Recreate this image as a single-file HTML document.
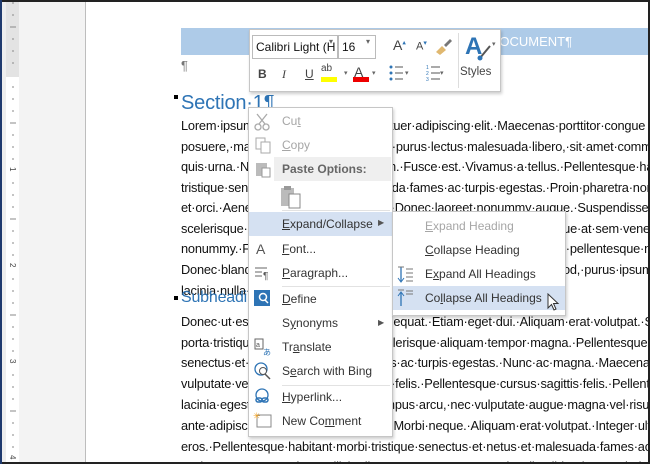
<!DOCTYPE html>
<html><head><style>
*{margin:0;padding:0;box-sizing:border-box}
body{width:650px;height:464px;overflow:hidden;background:#fff;position:relative;font-family:"Liberation Sans",sans-serif}
.abs{position:absolute}
.clip{position:absolute;left:0;top:0;width:648px;height:462px;overflow:hidden}
.doc{position:absolute;left:181px;font-size:12.8px;color:#111;white-space:nowrap;letter-spacing:-0.2px}
.mi{position:absolute;left:282px;font-size:12px;color:#333;white-space:nowrap}
.si{position:absolute;left:425px;font-size:12px;color:#333;white-space:nowrap}
.dis{color:#a6a6a6}
u{text-decoration:underline}
</style></head><body>
<div class="abs" style="left:0;top:0;width:650px;height:2px;background:#222"></div>
<div class="abs" style="left:0;top:462px;width:650px;height:2px;background:#222"></div>
<div class="abs" style="left:0;top:0;width:2px;height:464px;background:#1f3a6e"></div>
<div class="abs" style="left:648px;top:0;width:2px;height:464px;background:#222"></div>
<div class="abs" style="left:2px;top:2px;width:4px;height:460px;background:#eee"></div>
<div class="abs" style="left:6px;top:2px;width:13px;height:75px;background:#e3e3e3"></div>
<div class="abs" style="left:6px;top:77px;width:13px;height:385px;background:#fff"></div>
<div class="abs" style="left:19px;top:2px;width:66px;height:460px;background:#f3f3f3"></div>
<div class="abs" style="left:85px;top:2px;width:1px;height:460px;background:#bdbdbd"></div>
<svg class="abs" style="left:6px;top:0" width="13" height="464">
<g stroke="#888" stroke-width="1">
<line x1="6" y1="3" x2="8" y2="3"/><line x1="6" y1="15" x2="8" y2="15"/><line x1="4" y1="27" x2="10" y2="27"/><line x1="6" y1="39" x2="8" y2="39"/><line x1="6" y1="51" x2="8" y2="51"/><line x1="6" y1="63" x2="8" y2="63"/>
<line x1="6" y1="87" x2="8" y2="87"/><line x1="6" y1="99" x2="8" y2="99"/><line x1="6" y1="111" x2="8" y2="111"/><line x1="4" y1="123" x2="10" y2="123"/><line x1="6" y1="135" x2="8" y2="135"/><line x1="6" y1="147" x2="8" y2="147"/><line x1="6" y1="159" x2="8" y2="159"/>
<line x1="6" y1="183" x2="8" y2="183"/><line x1="6" y1="195" x2="8" y2="195"/><line x1="6" y1="207" x2="8" y2="207"/><line x1="4" y1="219" x2="10" y2="219"/><line x1="6" y1="231" x2="8" y2="231"/><line x1="6" y1="243" x2="8" y2="243"/><line x1="6" y1="255" x2="8" y2="255"/>
<line x1="6" y1="279" x2="8" y2="279"/><line x1="6" y1="291" x2="8" y2="291"/><line x1="6" y1="303" x2="8" y2="303"/><line x1="4" y1="315" x2="10" y2="315"/><line x1="6" y1="327" x2="8" y2="327"/><line x1="6" y1="339" x2="8" y2="339"/><line x1="6" y1="351" x2="8" y2="351"/>
<line x1="6" y1="375" x2="8" y2="375"/><line x1="6" y1="387" x2="8" y2="387"/><line x1="6" y1="399" x2="8" y2="399"/><line x1="4" y1="411" x2="10" y2="411"/><line x1="6" y1="423" x2="8" y2="423"/><line x1="6" y1="435" x2="8" y2="435"/><line x1="6" y1="447" x2="8" y2="447"/>
</g>
<g font-size="8" fill="#444" font-family="Liberation Sans"><text x="3" y="174" transform="rotate(90 7 171)">1</text><text x="3" y="270" transform="rotate(90 7 267)">2</text><text x="3" y="366" transform="rotate(90 7 363)">3</text><text x="3" y="462" transform="rotate(90 7 459)">4</text></g>
</svg>

<div class="clip">
<div class="abs" style="left:181px;top:28px;width:467px;height:27px;background:#aecbe8"></div>
<div class="abs" style="left:490px;top:34px;color:#fff;font-size:13px">DOCUMENT¶</div>
<div class="doc" style="top:58px;color:#777">¶</div>
<div class="abs" style="left:174px;top:95px;width:4px;height:4px;background:#000"></div>
<div class="doc" style="top:92px;font-size:20px;color:#2e74b5">Section·1¶</div>
<div class="doc" style="top:118px">Lorem·ipsum·dolor·sit·amet,·consectetuer·adipiscing·elit.·Maecenas·porttitor·congue</div>
<div class="doc" style="top:139px">posuere,·magna·sed·pulvinar·ultricies,·purus·lectus·malesuada·libero,·sit·amet·commodo</div>
<div class="doc" style="top:159px">quis·urna.·Nunc·viverra·imperdiet·enim.·Fusce·est.·Vivamus·a·tellus.·Pellentesque·habitant</div>
<div class="doc" style="top:180px">tristique·senectus·et·netus·et·malesuada·fames·ac·turpis·egestas.·Proin·pharetra·nonummy</div>
<div class="doc" style="top:200px">et·orci.·Aenean·nec·lorem.·In·porttitor.·Donec·laoreet·nonummy·augue.·Suspendisse·dui</div>
<div class="doc" style="top:221px">scelerisque·at,·vulputate·vitae,·pretium·mattis,·nunc.·Mauris·eget·neque·at·sem·venenatis</div>
<div class="doc" style="top:241px">nonummy.·Fusce·aliquet·pede·non·pede.·Suspendisse·dapibus·lorem·pellentesque·magna</div>
<div class="doc" style="top:262px">Donec·blandit·feugiat·ligula.·Donec·hendrerit,·felis·et·imperdiet·euismod,·purus·ipsum</div>
<div class="doc" style="top:283px">lacinia·nulla·non·metus.</div>
<div class="abs" style="left:174px;top:296px;width:4px;height:4px;background:#000"></div>
<div class="doc" style="top:289px;font-size:16px;color:#2e74b5">Subheading</div>
<div class="doc" style="top:314px">Donec·ut·est·in·lectus·consequat·consequat.·Etiam·eget·dui.·Aliquam·erat·volutpat.·Sed·at</div>
<div class="doc" style="top:335px">porta·tristique·libero.·Pellentesque·scelerisque·aliquam·tempor·magna.·Pellentesque·habitant</div>
<div class="doc" style="top:355px">senectus·et·netus·et·malesuada·fames·ac·turpis·egestas.·Nunc·ac·magna.·Maecenas·odio</div>
<div class="doc" style="top:376px">vulputate·vel,·auctor·ac,·accumsan·id,·felis.·Pellentesque·cursus·sagittis·felis.·Pellentesque</div>
<div class="doc" style="top:397px">lacinia·egestas·augue.·Vestibulum·tempus·arcu,·nec·vulputate·augue·magna·vel·risus.·Cras</div>
<div class="doc" style="top:418px">ante·adipiscing·rhoncus·ultrices·in·mi.·Morbi·neque.·Aliquam·erat·volutpat.·Integer·ultrices</div>
<div class="doc" style="top:439px">eros.·Pellentesque·habitant·morbi·tristique·senectus·et·netus·et·malesuada·fames·ac</div>
<div class="doc" style="top:459px">Proin·semper,·ante·vitae·sollicitudin·posuere,·metus·quam·iaculis·nibh,·vitae·scelerisque</div>
</div>

<!-- mini toolbar -->
<div class="abs" style="left:249px;top:29px;width:252px;height:63px;background:#fff;border:1px solid #c6c6c6;box-shadow:1px 2px 3px rgba(0,0,0,.2)"></div>
<div class="abs" style="left:252px;top:35px;width:86px;height:24px;border:1px solid #bbb;font-size:12px;padding:4px 0 0 3px;color:#111;overflow:hidden;white-space:nowrap">Calibri Light (H</div>
<div class="abs" style="left:329px;top:37px;font-size:8px;color:#666">▾</div>
<div class="abs" style="left:338px;top:35px;width:38px;height:24px;border:1px solid #bbb;font-size:12px;padding:4px 0 0 3px;color:#111">16</div>
<div class="abs" style="left:366px;top:37px;font-size:8px;color:#666">▾</div>
<div class="abs" style="left:393px;top:37px;font-size:14px;color:#444">A<sup style="font-size:7px;color:#2e74b5">▴</sup></div>
<div class="abs" style="left:416px;top:39px;font-size:11px;color:#444">A<sup style="font-size:7px;color:#2e74b5">▾</sup></div>
<svg class="abs" style="left:434px;top:38px" width="20" height="18"><path d="M2 14 L8 8 L12 12 L6 17 Z" fill="#e0b870"/><path d="M10 7 L16 1 L18 3 L12 9 Z" fill="#777"/></svg>
<div class="abs" style="left:458px;top:33px;width:1px;height:55px;background:#ddd"></div>
<div class="abs" style="left:465px;top:33px;font-size:24px;font-weight:bold;color:#2e74b5">A</div>
<svg class="abs" style="left:476px;top:40px" width="20" height="22"><path d="M4 18 L14 6" stroke="#555" stroke-width="2"/><circle cx="4" cy="18" r="2.5" fill="#2e74b5"/></svg>
<div class="abs" style="left:492px;top:40px;font-size:7px;color:#666">▾</div>
<div class="abs" style="left:460px;top:66px;font-size:11.5px;color:#444">Styles</div>
<div class="abs" style="left:258px;top:67px;font-size:12px;font-weight:bold;color:#444">B</div>
<div class="abs" style="left:282px;top:67px;font-size:12px;font-style:italic;color:#444;font-family:'Liberation Serif',serif">I</div>
<div class="abs" style="left:305px;top:67px;font-size:12px;color:#444;text-decoration:underline">U</div>
<div class="abs" style="left:321px;top:63px;font-size:10px;color:#444">ab</div>
<div class="abs" style="left:321px;top:77px;width:16px;height:5px;background:#ffff00"></div>
<div class="abs" style="left:344px;top:69px;font-size:7px;color:#666">▾</div>
<div class="abs" style="left:354px;top:64px;font-size:14px;color:#444">A</div>
<div class="abs" style="left:353px;top:77px;width:16px;height:5px;background:#e00"></div>
<div class="abs" style="left:372px;top:69px;font-size:7px;color:#666">▾</div>
<svg class="abs" style="left:388px;top:63px" width="18" height="22"><g fill="#2e74b5"><circle cx="3" cy="4" r="1.5"/><circle cx="3" cy="10" r="1.5"/><circle cx="3" cy="16" r="1.5"/></g><g stroke="#555"><line x1="7" y1="4" x2="15" y2="4"/><line x1="7" y1="10" x2="15" y2="10"/><line x1="7" y1="16" x2="15" y2="16"/></g></svg>
<div class="abs" style="left:405px;top:69px;font-size:7px;color:#666">▾</div>
<svg class="abs" style="left:426px;top:63px" width="20" height="22"><g font-size="5" fill="#2e74b5"><text x="0" y="6">1</text><text x="0" y="12">2</text><text x="0" y="18">3</text></g><g stroke="#555"><line x1="5" y1="4" x2="14" y2="4"/><line x1="5" y1="10" x2="14" y2="10"/><line x1="5" y1="16" x2="14" y2="16"/></g></svg>
<div class="abs" style="left:440px;top:69px;font-size:7px;color:#666">▾</div>

<!-- context menu -->
<div class="abs" style="left:248px;top:107px;width:145px;height:330px;background:#fff;border:1px solid #c6c6c6;box-shadow:1px 2px 3px rgba(0,0,0,.2)"></div>
<svg class="abs" style="left:254px;top:112px" width="20" height="20"><g stroke="#aaa" fill="none" stroke-width="1.3"><circle cx="4" cy="15" r="3"/><circle cx="12" cy="15" r="3"/><path d="M5 12 L13 2 M11 12 L3 2"/></g></svg>
<div class="mi dis" style="top:114px">Cu<u>t</u></div>
<svg class="abs" style="left:255px;top:137px" width="18" height="18"><g stroke="#aaa" fill="none"><rect x="1" y="1" width="9" height="11"/><rect x="6" y="5" width="9" height="11" fill="#fff"/></g></svg>
<div class="mi dis" style="top:138px"><u>C</u>opy</div>
<div class="abs" style="left:274px;top:157px;width:117px;height:24px;background:#efefef"></div>
<svg class="abs" style="left:255px;top:160px" width="18" height="18"><rect x="1" y="3" width="11" height="13" fill="#bbb"/><rect x="7" y="8" width="8" height="9" fill="#fff" stroke="#999"/></svg>
<div class="mi" style="top:162px;font-weight:bold;color:#666">Paste Options:</div>
<svg class="abs" style="left:280px;top:185px" width="24" height="24"><rect x="1" y="3" width="13" height="18" fill="#bbb"/><rect x="4" y="1" width="7" height="4" fill="#999"/><rect x="9" y="9" width="11" height="14" fill="#fff" stroke="#888"/></svg>
<div class="abs" style="left:282px;top:210px;width:108px;height:1px;background:#e2e2e2"></div>
<div class="abs" style="left:249px;top:212px;width:143px;height:24px;background:#d5e1f2"></div>
<div class="mi" style="top:217px"><u>E</u>xpand/Collapse</div>
<div class="abs" style="left:378px;top:218px;font-size:8px;color:#555">▶</div>
<div class="abs" style="left:256px;top:241px;font-size:14px;color:#555">A</div>
<div class="mi" style="top:242px"><u>F</u>ont...</div>
<svg class="abs" style="left:254px;top:265px" width="18" height="16"><g stroke="#666"><line x1="1" y1="3" x2="13" y2="3"/><line x1="1" y1="7" x2="8" y2="7"/><line x1="1" y1="11" x2="8" y2="11"/></g><text x="9" y="14" font-size="10" fill="#555">¶</text></svg>
<div class="mi" style="top:266px"><u>P</u>aragraph...</div>
<div class="abs" style="left:282px;top:286px;width:108px;height:1px;background:#e2e2e2"></div>
<svg class="abs" style="left:254px;top:290px" width="18" height="18"><rect x="0" y="0" width="16" height="16" fill="#2e74b5"/><circle cx="9" cy="7" r="3.5" fill="none" stroke="#fff" stroke-width="1.5"/><line x1="11" y1="10" x2="14" y2="13" stroke="#fff" stroke-width="1.5"/></svg>
<div class="mi" style="top:292px"><u>D</u>efine</div>
<div class="mi" style="top:316px">S<u>y</u>nonyms</div>
<div class="abs" style="left:378px;top:318px;font-size:8px;color:#555">▶</div>
<svg class="abs" style="left:254px;top:338px" width="18" height="18"><rect x="1" y="1" width="8" height="10" fill="none" stroke="#666"/><text x="2" y="9" font-size="7" fill="#555">a</text><text x="9" y="17" font-size="8" fill="#2e74b5">あ</text></svg>
<div class="mi" style="top:340px">Tr<u>a</u>nslate</div>
<svg class="abs" style="left:254px;top:362px" width="18" height="18"><circle cx="7" cy="7" r="6" fill="none" stroke="#2e74b5" stroke-width="1.3"/><circle cx="9" cy="9" r="3.5" fill="#fff" stroke="#555"/><line x1="11" y1="12" x2="16" y2="17" stroke="#555" stroke-width="1.5"/></svg>
<div class="mi" style="top:364px">S<u>e</u>arch with Bing</div>
<div class="abs" style="left:282px;top:385px;width:108px;height:1px;background:#e2e2e2"></div>
<svg class="abs" style="left:254px;top:388px" width="18" height="18"><circle cx="8" cy="7" r="6" fill="none" stroke="#2e74b5" stroke-width="1.3"/><rect x="2" y="10" width="6" height="4" rx="2" fill="none" stroke="#2e74b5" stroke-width="1.5"/><rect x="8" y="10" width="6" height="4" rx="2" fill="none" stroke="#2e74b5" stroke-width="1.5"/></svg>
<div class="mi" style="top:390px"><u>H</u>yperlink...</div>
<svg class="abs" style="left:253px;top:411px" width="20" height="18"><rect x="4" y="4" width="14" height="12" fill="#fff" stroke="#888"/><text x="0" y="8" font-size="9" fill="#f0a020">✳</text></svg>
<div class="mi" style="top:414px">New Co<u>m</u>ment</div>

<!-- submenu -->
<div class="abs" style="left:392px;top:211px;width:174px;height:105px;background:#fff;border:1px solid #c6c6c6;box-shadow:1px 2px 3px rgba(0,0,0,.2)"></div>
<div class="si dis" style="top:219px"><u>E</u>xpand Heading</div>
<div class="si" style="top:243px"><u>C</u>ollapse Heading</div>
<svg class="abs" style="left:397px;top:266px" width="18" height="18"><line x1="4" y1="1" x2="4" y2="15" stroke="#2e74b5" stroke-width="1.3"/><path d="M1 12 L4 16 L7 12" fill="none" stroke="#2e74b5"/><g stroke="#777"><line x1="1" y1="1" x2="7" y2="1"/><line x1="9" y1="3" x2="16" y2="3"/><line x1="9" y1="7" x2="16" y2="7"/><line x1="9" y1="11" x2="16" y2="11"/><line x1="9" y1="15" x2="16" y2="15"/></g></svg>
<div class="si" style="top:267px">E<u>x</u>pand All Headings</div>
<div class="abs" style="left:393px;top:286px;width:172px;height:24px;background:#d5e1f2"></div>
<svg class="abs" style="left:397px;top:289px" width="18" height="18"><line x1="4" y1="4" x2="4" y2="17" stroke="#2e74b5" stroke-width="1.3"/><path d="M1 7 L4 3 L7 7" fill="none" stroke="#2e74b5"/><g stroke="#777"><line x1="1" y1="1" x2="7" y2="1"/><line x1="9" y1="2" x2="16" y2="2"/><line x1="9" y1="5" x2="16" y2="5"/></g></svg>
<div class="si" style="top:291px">Co<u>l</u>lapse All Headings</div>
<svg class="abs" style="left:547px;top:293px" width="14" height="20"><path d="M1 1 L1 15 L4.5 11.5 L7 17 L9 16 L6.5 10.5 L11 10.5 Z" fill="#fff" stroke="#333"/></svg>
</body></html>
